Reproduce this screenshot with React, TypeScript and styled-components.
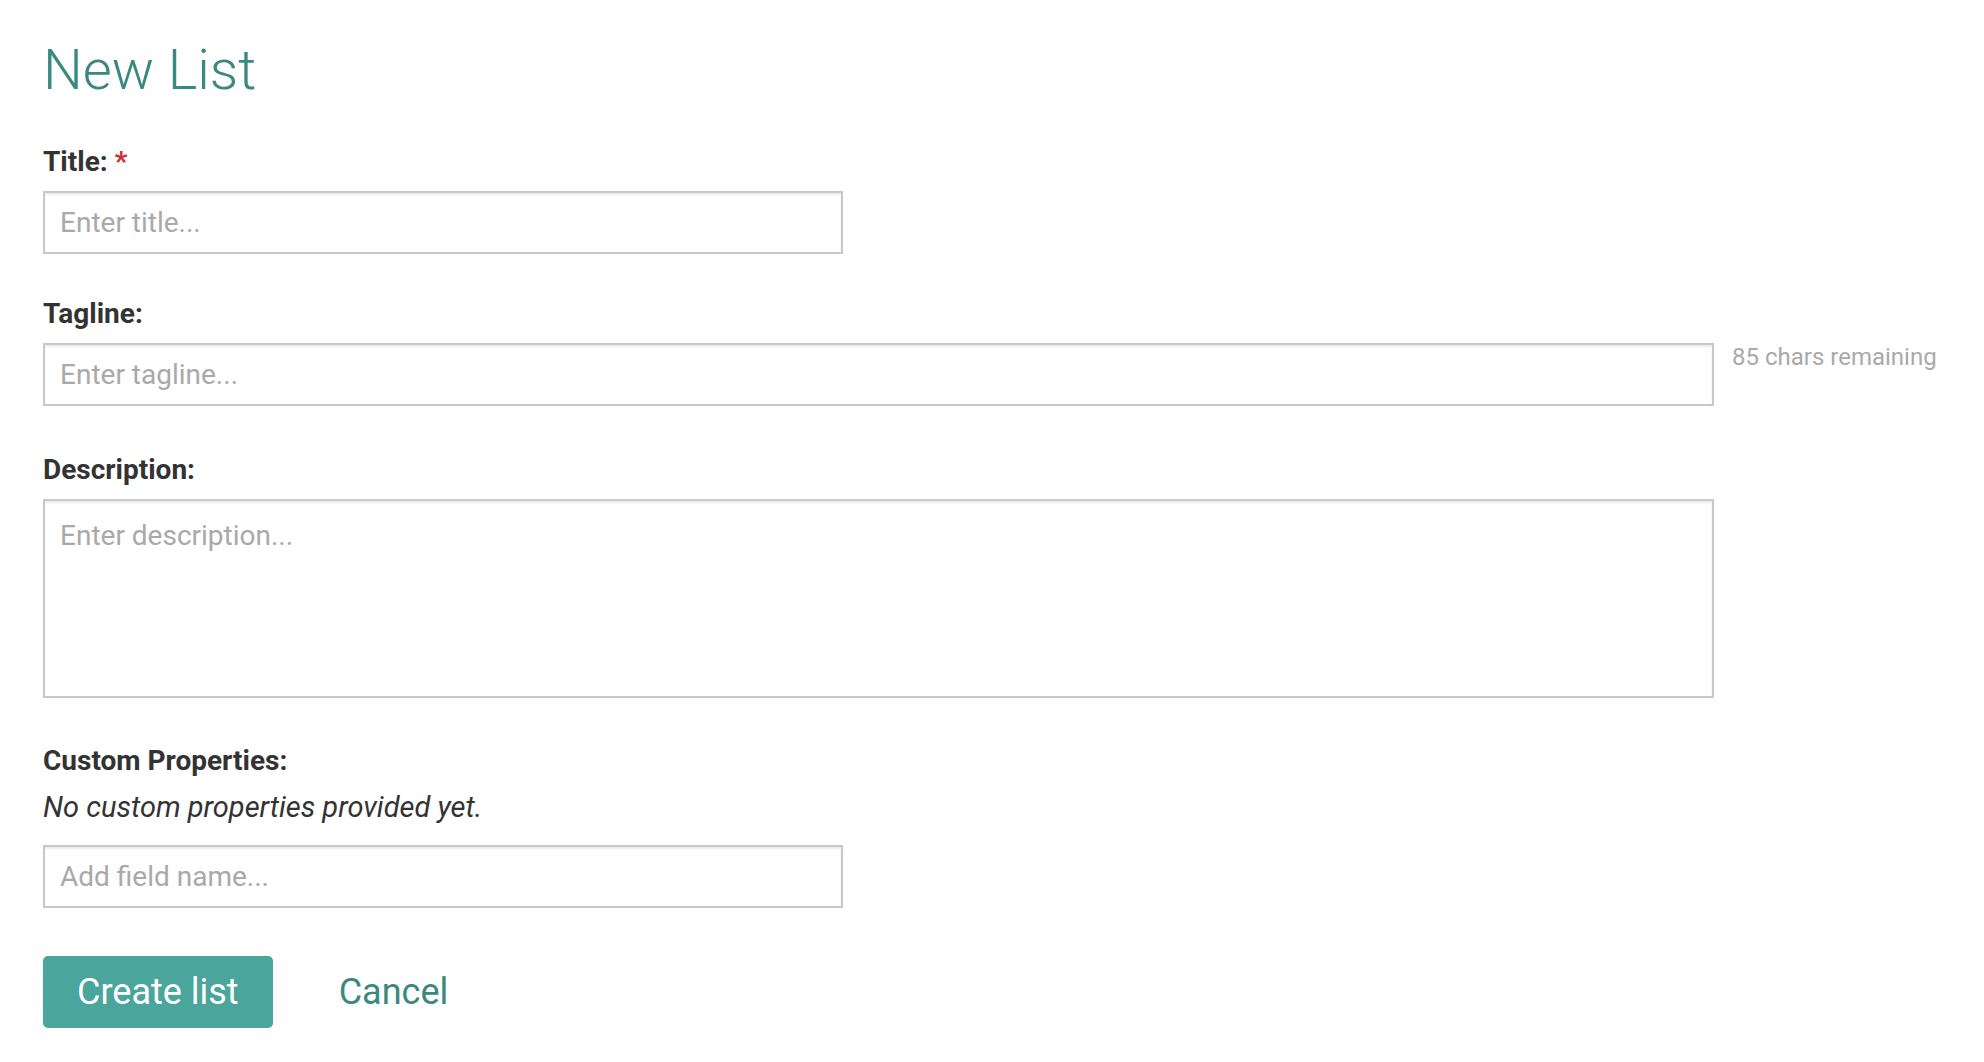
import React from 'react'
import styled, { createGlobalStyle } from 'styled-components'

const Colors = {
  teal: '#3a8981',
  button: '#4aa59c',
  text: '#333333',
  border: '#c8c8c8',
  hint: '#a9a9a9',
  required: '#cf2e2e'
}

const GlobalStyle = createGlobalStyle`
  html, body {
    margin: 0;
    padding: 0;
    background: #ffffff;
    font-family: Roboto, 'Liberation Sans', Arial, sans-serif;
    color: ${Colors.text};
  }
  * { box-sizing: border-box; }
`

const Page = styled.div`
  padding: 36px 0 0 43px;
`

const Heading = styled.h1`
  margin: 0 0 41px 0;
  font-size: 56px;
  line-height: 68px;
  font-weight: 300;
  color: ${Colors.teal};
`

const FieldGroup = styled.div<{ $gap?: number }>`
  margin-bottom: ${props => props.$gap ?? 42}px;
`

const Label = styled.label`
  display: block;
  margin-bottom: 12px;
  font-size: 28px;
  line-height: 34px;
  font-weight: 700;
  color: ${Colors.text};
`

const Required = styled.span`
  color: ${Colors.required};
`

const Row = styled.div`
  display: flex;
  align-items: flex-start;
  gap: 18px;
`

const TextInput = styled.input<{ $wide?: boolean }>`
  display: block;
  width: ${props => (props.$wide ? 1671 : 800)}px;
  height: 63px;
  margin: 0;
  padding: 0 15px;
  border: 2px solid ${Colors.border};
  border-radius: 0;
  box-shadow: inset 0 2px 2px rgba(0, 0, 0, 0.075);
  font-family: Roboto, 'Liberation Sans', Arial, sans-serif;
  font-size: 28px;
  color: ${Colors.text};
  outline: none;
  &::placeholder {
    color: ${Colors.hint};
  }
`

const TextArea = styled.textarea`
  display: block;
  width: 1671px;
  height: 199px;
  margin: 0;
  padding: 15px;
  border: 2px solid ${Colors.border};
  border-radius: 0;
  box-shadow: inset 0 2px 2px rgba(0, 0, 0, 0.075);
  font-family: Roboto, 'Liberation Sans', Arial, sans-serif;
  font-size: 28px;
  line-height: 40px;
  color: ${Colors.text};
  resize: none;
  outline: none;
  &::placeholder {
    color: ${Colors.hint};
  }
`

const Hint = styled.span`
  font-size: 24px;
  line-height: 28px;
  color: ${Colors.hint};
  white-space: nowrap;
`

const Empty = styled.p`
  margin: 7px 0 21px 0;
  font-size: 29px;
  line-height: 34px;
  font-style: italic;
  color: ${Colors.text};
`

const Actions = styled.div`
  display: flex;
  align-items: center;
  gap: 32px;
`

const Button = styled.button<{ $primary?: boolean }>`
  height: 72px;
  padding: 0 34px;
  border: none;
  border-radius: 5px;
  background: ${props => (props.$primary ? Colors.button : 'transparent')};
  color: ${props => (props.$primary ? '#ffffff' : Colors.teal)};
  font-family: Roboto, 'Liberation Sans', Arial, sans-serif;
  font-size: 36px;
  font-weight: 400;
  cursor: pointer;
`

const App = () => (
  <Page>
    <GlobalStyle />
    <Heading>New List</Heading>

    <FieldGroup $gap={43}>
      <Label>Title: <Required>*</Required></Label>
      <TextInput placeholder="Enter title..." />
    </FieldGroup>

    <FieldGroup $gap={47}>
      <Label>Tagline:</Label>
      <Row>
        <TextInput $wide placeholder="Enter tagline..." />
        <Hint>85 chars remaining</Hint>
      </Row>
    </FieldGroup>

    <FieldGroup $gap={46}>
      <Label>Description:</Label>
      <TextArea placeholder="Enter description..." />
    </FieldGroup>

    <FieldGroup $gap={48}>
      <Label>Custom Properties:</Label>
      <Empty>No custom properties provided yet.</Empty>
      <TextInput placeholder="Add field name..." />
    </FieldGroup>

    <Actions>
      <Button $primary>Create list</Button>
      <Button>Cancel</Button>
    </Actions>
  </Page>
)

export default App
